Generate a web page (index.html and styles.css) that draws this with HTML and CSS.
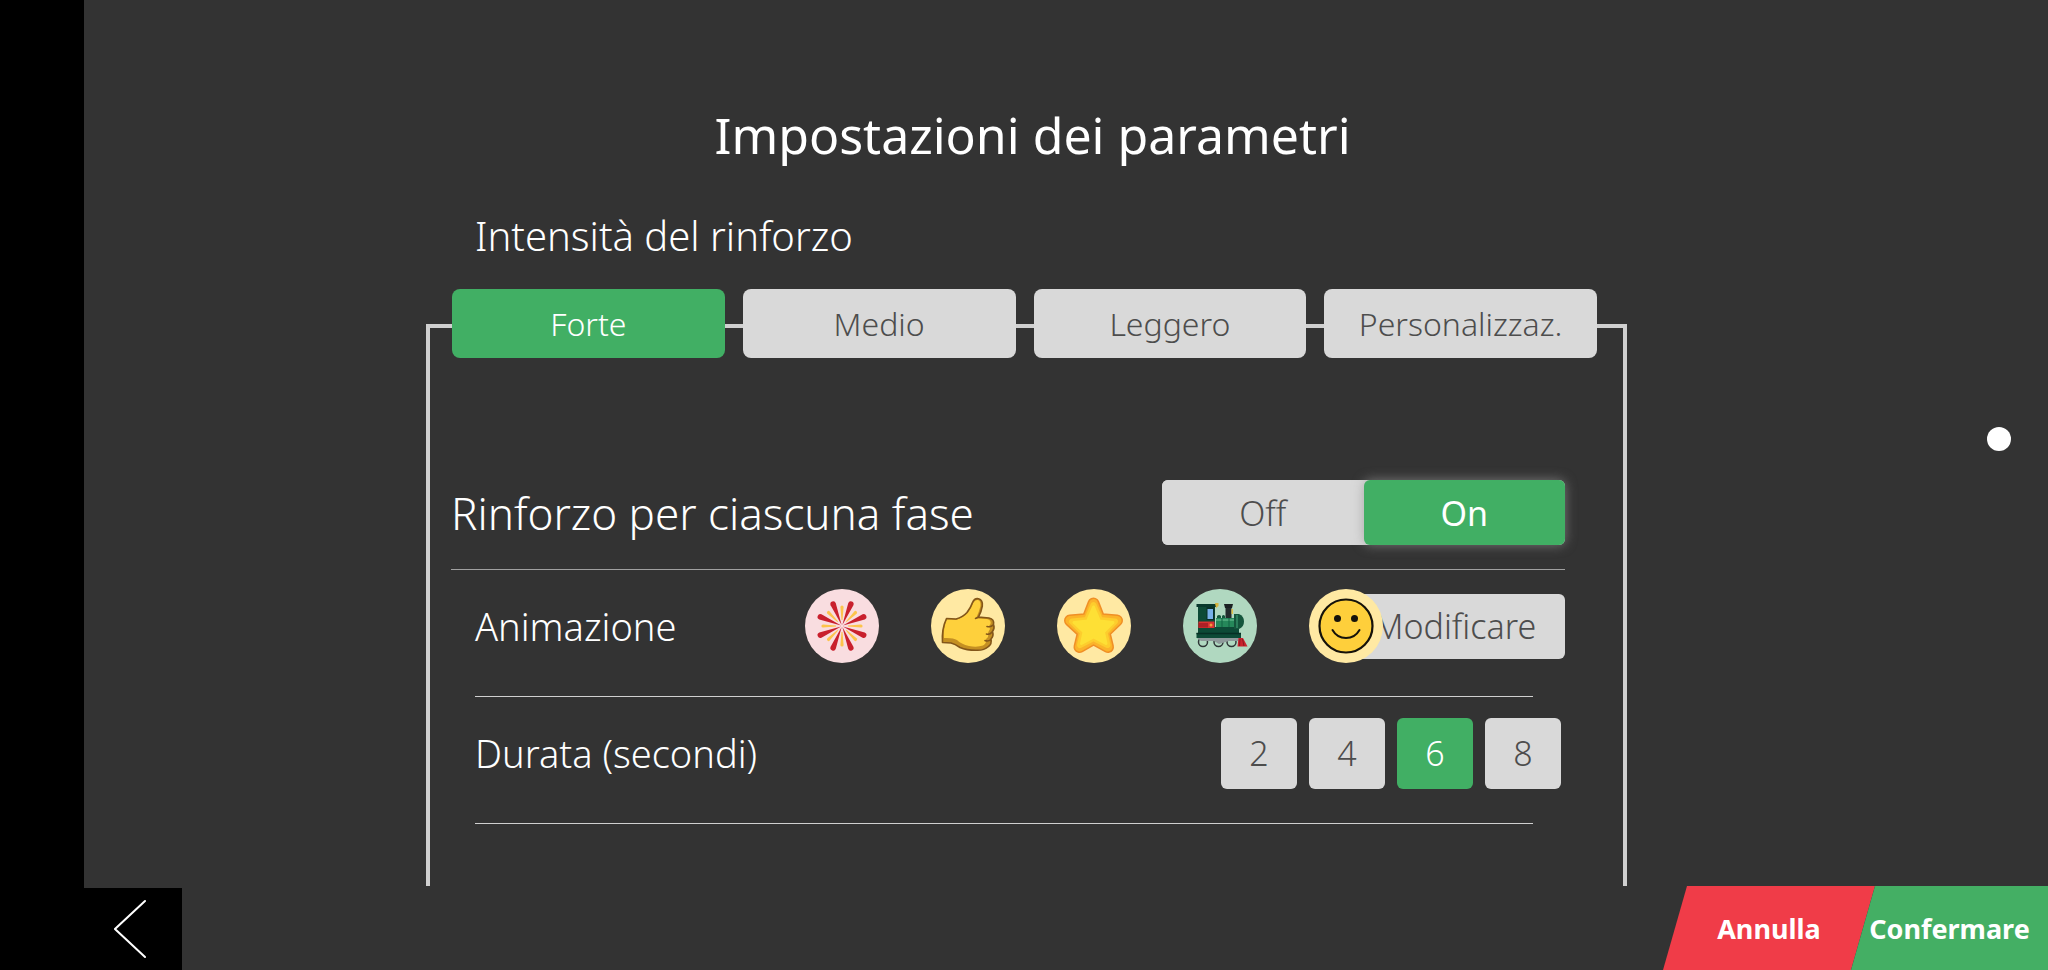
FILE: index.html
```
<!DOCTYPE html>
<html lang="it">
<head>
    <meta charset="UTF-8">
    <meta name="viewport" content="width=device-width, initial-scale=1.0">
    <title>Impostazioni dei parametri</title>
    <link rel="stylesheet" href="styles.css">
</head>
<body>
    <div class="app">
        <div class="side-strip"></div>
        <div class="screen">
            <main class="settings">
                <h1>Impostazioni dei parametri</h1>
                <h2>Intensità del rinforzo</h2>
                <div class="tabs">
                    <button type="button" class="btn active">Forte</button>
                    <button type="button" class="btn">Medio</button>
                    <button type="button" class="btn">Leggero</button>
                    <button type="button" class="btn">Personalizzaz.</button>
                </div>
                <section class="panel">
                    <div class="row row-main">
                        <h3 id="phase-label">Rinforzo per ciascuna fase</h3>
                        <div class="toggle" role="group" aria-labelledby="phase-label">
                            <button type="button" class="btn">Off</button>
                            <button type="button" class="btn active">On</button>
                        </div>
                    </div>
                    <div class="row">
                        <span class="label">Animazione</span>
                        <div class="animations">
                            <!-- fireworks -->
                            <svg class="icon" viewBox="0 0 74 74">
                                <defs>
                                    <path id="ray" d="M37 36 L34.200 13.500 A2.800 2.800 0 0 1 39.800 13.500 Z"/>
                                    <path id="spark" d="M36.500 31 L35.400 18 A1.600 1.600 0 0 1 38.600 18 L37.500 31 Z"/>
                                </defs>
                                <circle cx="37" cy="37" r="37" fill="#f9dde0"/>
                                <g fill="#c9202d">
                                    <use href="#ray" transform="rotate(22 37 37)"/>
                                    <use href="#ray" transform="rotate(67 37 37)"/>
                                    <use href="#ray" transform="rotate(113 37 37)"/>
                                    <use href="#ray" transform="rotate(158 37 37)"/>
                                    <use href="#ray" transform="rotate(202 37 37)"/>
                                    <use href="#ray" transform="rotate(247 37 37)"/>
                                    <use href="#ray" transform="rotate(293 37 37)"/>
                                    <use href="#ray" transform="rotate(338 37 37)"/>
                                </g>
                                <g fill="#fdc44b">
                                    <use href="#spark"/>
                                    <use href="#spark" transform="rotate(45 37 37)"/>
                                    <use href="#spark" transform="rotate(90 37 37)"/>
                                    <use href="#spark" transform="rotate(135 37 37)"/>
                                    <use href="#spark" transform="rotate(180 37 37)"/>
                                    <use href="#spark" transform="rotate(225 37 37)"/>
                                    <use href="#spark" transform="rotate(270 37 37)"/>
                                    <use href="#spark" transform="rotate(315 37 37)"/>
                                </g>
                            </svg>
                            <!-- thumb up -->
                            <svg class="icon" viewBox="0 0 74 74">
                                <circle cx="37" cy="37" r="37" fill="#ffe9a3"/>
                                <path d="M15.500 29.500 L25 30 Q32 28 36 23.500 Q40 18 41.500 13.500 Q43.500 9 47.500 9.800 Q52 11 51.300 17 Q50.500 22 47.500 28 L58 29 Q63.500 30 62.500 35.500 Q64 39 61.500 42.500 Q63 47 60 50 Q61 55 57.500 57.500 Q53 61.500 46 61.300 Q36 61.500 29 58.500 Q24 55 20 54 L11.500 53.500 Q10.500 40 15.500 29.500 Z" fill="#c48f22"/>
                                <path d="M16 30 L25 31 Q33 28 37 23.500 Q41 18 42.500 13.500 Q44 10.500 47 11 Q50 12 49.500 17 Q48 23 45 29.500 L56 30 Q60.500 31 59.500 35 Q57.500 37 59 40 Q57 43 57 45 Q58 48 55 50 Q56 54 52 56.500 Q46 58.500 38 57 Q30 55 26 51 Q22 48.500 13 49 Q12 40 16 30 Z" fill="#fed03c"/>
                                <path d="M15.500 29.500 L25 30 Q32 28 36 23.500 Q40 18 41.500 13.500 Q43.500 9 47.500 9.800 Q52 11 51.300 17 Q50.500 22 47.500 28 L58 29 Q63.500 30 62.500 35.500 Q64 39 61.500 42.500 Q63 47 60 50 Q61 55 57.500 57.500 Q53 61.500 46 61.300 Q36 61.500 29 58.500 Q24 55 20 54 L11.500 53.500 Q10.500 40 15.500 29.500 Z M62 36 Q60 38.500 56 37.500 M61 43 Q59 46 55.500 45 M60 50.500 Q57 53 54 51.500 M47.500 28 L44.500 29.500" fill="none" stroke="#83561a" stroke-width="1.600" stroke-linejoin="round" stroke-linecap="round"/>
                            </svg>
                            <!-- star -->
                            <svg class="icon" viewBox="0 0 74 74">
                                <circle cx="37" cy="37" r="37" fill="#ffe9a3"/>
                                <g stroke-linejoin="round">
                                    <path d="M36.500 14.500 L42.500 30 L60 31.500 L47.500 43.500 L51 58 L36.500 50 L22.500 58 L26 43.500 L13 31.500 L30.500 30 Z" fill="#f08f26" stroke="#f08f26" stroke-width="12"/>
                                    <path d="M36.500 14.500 L42.500 30 L60 31.500 L47.500 43.500 L51 58 L36.500 50 L22.500 58 L26 43.500 L13 31.500 L30.500 30 Z" fill="#fbb32a" stroke="#fbb32a" stroke-width="9"/>
                                    <path d="M36.500 16 L43 31 L58 32.500 L47.500 43.500 L50.500 56 L36.500 49 L23 56 L26 43.500 L15 32.500 L30 31 Z" fill="#fdcd2d" stroke="#fdcd2d" stroke-width="6"/>
                                    <path d="M36.500 18 L42.500 32 L56 33.500 L46.500 43 L49 54.500 L36.500 48 L24.500 54.500 L27 43 L17 33.500 L30.500 32 Z" fill="#fee035" stroke="#fee035" stroke-width="3"/>
                                </g>
                            </svg>
                            <!-- train -->
                            <svg class="icon" viewBox="0 0 74 74">
                                <circle cx="37" cy="37" r="37" fill="#b0d8c0"/>
                                <g fill="none" stroke="#2e3536" stroke-width="1.500">
                                    <circle cx="20" cy="53" r="4.500"/>
                                    <circle cx="35.500" cy="53" r="4.500"/>
                                    <circle cx="48.500" cy="53" r="4.500"/>
                                </g>
                                <path d="M14 49 H56 V52 H49 L46 52 L36 55 L31 52 H18 Z" fill="#8f9a9b"/>
                                <path d="M55.500 49 H60 L64.500 57.500 H54.500 Z" fill="#c9232e"/>
                                <path d="M57 50 L56.500 57 M59.500 50 L61 57" stroke="#8f1820"/>
                                <path d="M15 17 H32 V38 H56 V44 H58 V49 H13.500 V44 H15 Z" fill="#0d4a36"/>
                                <path d="M13.500 44.500 H58" stroke="#072f24" stroke-width="1.500"/>
                                <path d="M23.500 18 H31.500 V31 H23.500 Z" fill="#082f27"/>
                                <path d="M24.500 20 H30 V30 H24.500 Z" fill="#77b0e8"/>
                                <path d="M15.500 32.500 H31.500 V39 H15.500 Z" fill="#d83232"/>
                                <path d="M15.500 34 H25 V38.500 H15.500 Z" fill="#ad2026"/>
                                <circle cx="28" cy="36" r="1.500" fill="#f59a3a"/>
                                <path d="M13.500 15 H34 V18 H13.500 Z" fill="#08382c"/>
                                <path d="M32 14 H35.500 V17 L33 19 Z" fill="#d8b43d"/>
                                <path d="M42.500 18 H48.500 V30 H42.500 Z" fill="#242b2c"/>
                                <path d="M41 15 H50 L49 19 H42 Z" fill="#1b2022"/>
                                <path d="M48.500 20 H50 V25 H48.500 Z" fill="#dfc24a"/>
                                <path d="M33 29 H53 V38 H33 Z" fill="#25885a"/>
                                <path d="M33 30 H53 V32 H33 Z" fill="#4ba779"/>
                                <path d="M34 29 V27 Q36 25 38 27 V29 M39 29 V27 Q40.500 25 42 27 V29" fill="#15573d"/>
                                <path d="M39 29 V38 M46 29 V38" stroke="#136343"/>
                                <path d="M51 25 H56 Q61 27 61 32.500 Q61 38 56 40 H51 Z" fill="#14553c"/>
                                <path d="M54 26 V39" stroke="#2b7e5b" stroke-width="2"/>
                            </svg>
                            <!-- smile -->
                            <svg class="icon" viewBox="0 0 74 74">
                                <circle cx="37" cy="37" r="37" fill="#ffe9a3"/>
                                <circle cx="37" cy="37" r="26.500" fill="#fecf3b" stroke="#15120a" stroke-width="2.200"/>
                                <circle cx="28.500" cy="29.500" r="3.500" fill="#15120a"/>
                                <circle cx="45.500" cy="29.500" r="3.500" fill="#15120a"/>
                                <path d="M23.500 41 Q28 49 37 49 Q46 49 50.500 41" fill="none" stroke="#15120a" stroke-width="2" stroke-linecap="round"/>
                            </svg>
                        </div>
                        <button type="button" class="btn edit">Modificare</button>
                    </div>
                    <div class="row">
                        <span class="label" id="duration-label">Durata (secondi)</span>
                        <div class="durations" role="group" aria-labelledby="duration-label">
                            <button type="button" class="btn">2</button>
                            <button type="button" class="btn">4</button>
                            <button type="button" class="btn active">6</button>
                            <button type="button" class="btn">8</button>
                        </div>
                    </div>
                </section>
            </main>
            <footer class="actions">
                <button type="button" class="back" aria-label="Indietro">
                    <svg viewBox="0 0 32 60"><path d="M31 2 L1 30 L31 58" fill="none" stroke="#fff" stroke-width="2" stroke-linecap="round"/></svg>
                </button>
                <button type="button" class="action cancel">Annulla</button>
                <button type="button" class="action confirm">Confermare</button>
            </footer>
        </div>
    </div>
    <div class="assist-dot"></div>
</body>
</html>
```
FILE: styles.css
```
* {
    box-sizing: border-box;
}
body, html {
    margin: 0;
    padding: 0;
    height: 100%;
    font-family: 'Noto Sans', 'Open Sans', sans-serif;
    font-weight: 300;
    background: #333;
    color: #fff;
}
h1, h2, h3 {
    margin: 0;
}
button {
    font-family: inherit;
    border: none;
    padding: 0;
    cursor: pointer;
}
.app {
    display: grid;
    grid-template-columns: 84px 1fr;
    height: 100vh;
    overflow: hidden;
}
.side-strip {
    background: #000;
}
.screen {
    display: flex;
    flex-direction: column;
    min-height: 0;
}
.settings {
    flex: 1;
    min-height: 0;
    display: flex;
    flex-direction: column;
    width: 100%;
    max-width: 1280px;
    margin: 0 auto;
    padding-right: 79px;
}
h1 {
    padding: 99px 0 0 12px;
    font-size: 50px;
    line-height: 72px;
    font-weight: 400;
    text-align: center;
}
h2 {
    padding: 37px 49px 0;
    font-size: 40px;
    line-height: 56px;
    font-weight: 300;
}
.btn {
    background: #d9d9d9;
    color: #4d4d4d;
    font-size: 34px;
    font-weight: 300;
    border-radius: 6px;
}
.btn.active {
    background: #41af64;
    color: #fff;
}
.tabs {
    display: grid;
    grid-template-columns: repeat(4, 1fr);
    gap: 18px;
    padding: 0 30px 0 26px;
    margin-top: 25px;
    z-index: 1;
}
.tabs .btn {
    height: 69px;
    font-size: 32px;
    border-radius: 8px;
}
.panel {
    flex: 1;
    min-height: 0;
    margin-top: -34px;
    padding: 128px 58px 0 21px;
    border: 4px solid #d0d0d0;
    border-bottom: none;
}
.row {
    display: flex;
    align-items: center;
    height: 127px;
    margin: 0 32px 0 24px;
    padding-bottom: 14px;
    border-bottom: 1px solid #d0d0d0;
}
.row-main {
    height: 114px;
    margin: 0;
    padding: 0;
    border-color: #a0a0a0;
}
.row-main h3 {
    flex: 1;
    font-size: 44px;
    font-weight: 300;
}
.label {
    flex: 1;
    font-size: 38px;
}
.toggle {
    display: grid;
    grid-template-columns: 1fr 1fr;
    width: 403px;
    background: #d9d9d9;
    border-radius: 6px;
}
.toggle .btn {
    height: 65px;
}
.toggle .active {
    font-weight: 400;
    box-shadow: 0 0 12px rgba(150, 150, 150, 0.7);
}
.animations {
    display: flex;
    gap: 52px;
    z-index: 1;
}
.icon {
    display: block;
    width: 74px;
    height: 74px;
}
.edit {
    width: 220px;
    height: 65px;
    margin: 0 -32px 0 -38px;
}
.durations {
    display: flex;
    gap: 12px;
    margin-right: -28px;
}
.durations .btn {
    width: 76px;
    height: 71px;
}
.actions {
    display: flex;
    align-items: flex-end;
}
.back {
    display: flex;
    align-items: center;
    justify-content: center;
    width: 98px;
    height: 82px;
    margin-right: auto;
    padding-right: 6px;
    background: #000;
}
.back svg {
    width: 32px;
    height: 60px;
}
.action {
    height: 84px;
    font-size: 27px;
    font-weight: 700;
    color: #fff;
}
.cancel {
    width: 212px;
    background: #f03c48;
    clip-path: polygon(24px 0, 100% 0, calc(100% - 24px) 100%, 0 100%);
}
.confirm {
    width: 197px;
    margin-left: -24px;
    background: #44af64;
    clip-path: polygon(24px 0, 100% 0, 100% 100%, 0 100%);
}
/* floating assist button, lies over the page */
.assist-dot {
    position: absolute;
    top: 427px;
    right: 37px;
    width: 24px;
    height: 24px;
    border-radius: 50%;
    background: #fff;
}
```
